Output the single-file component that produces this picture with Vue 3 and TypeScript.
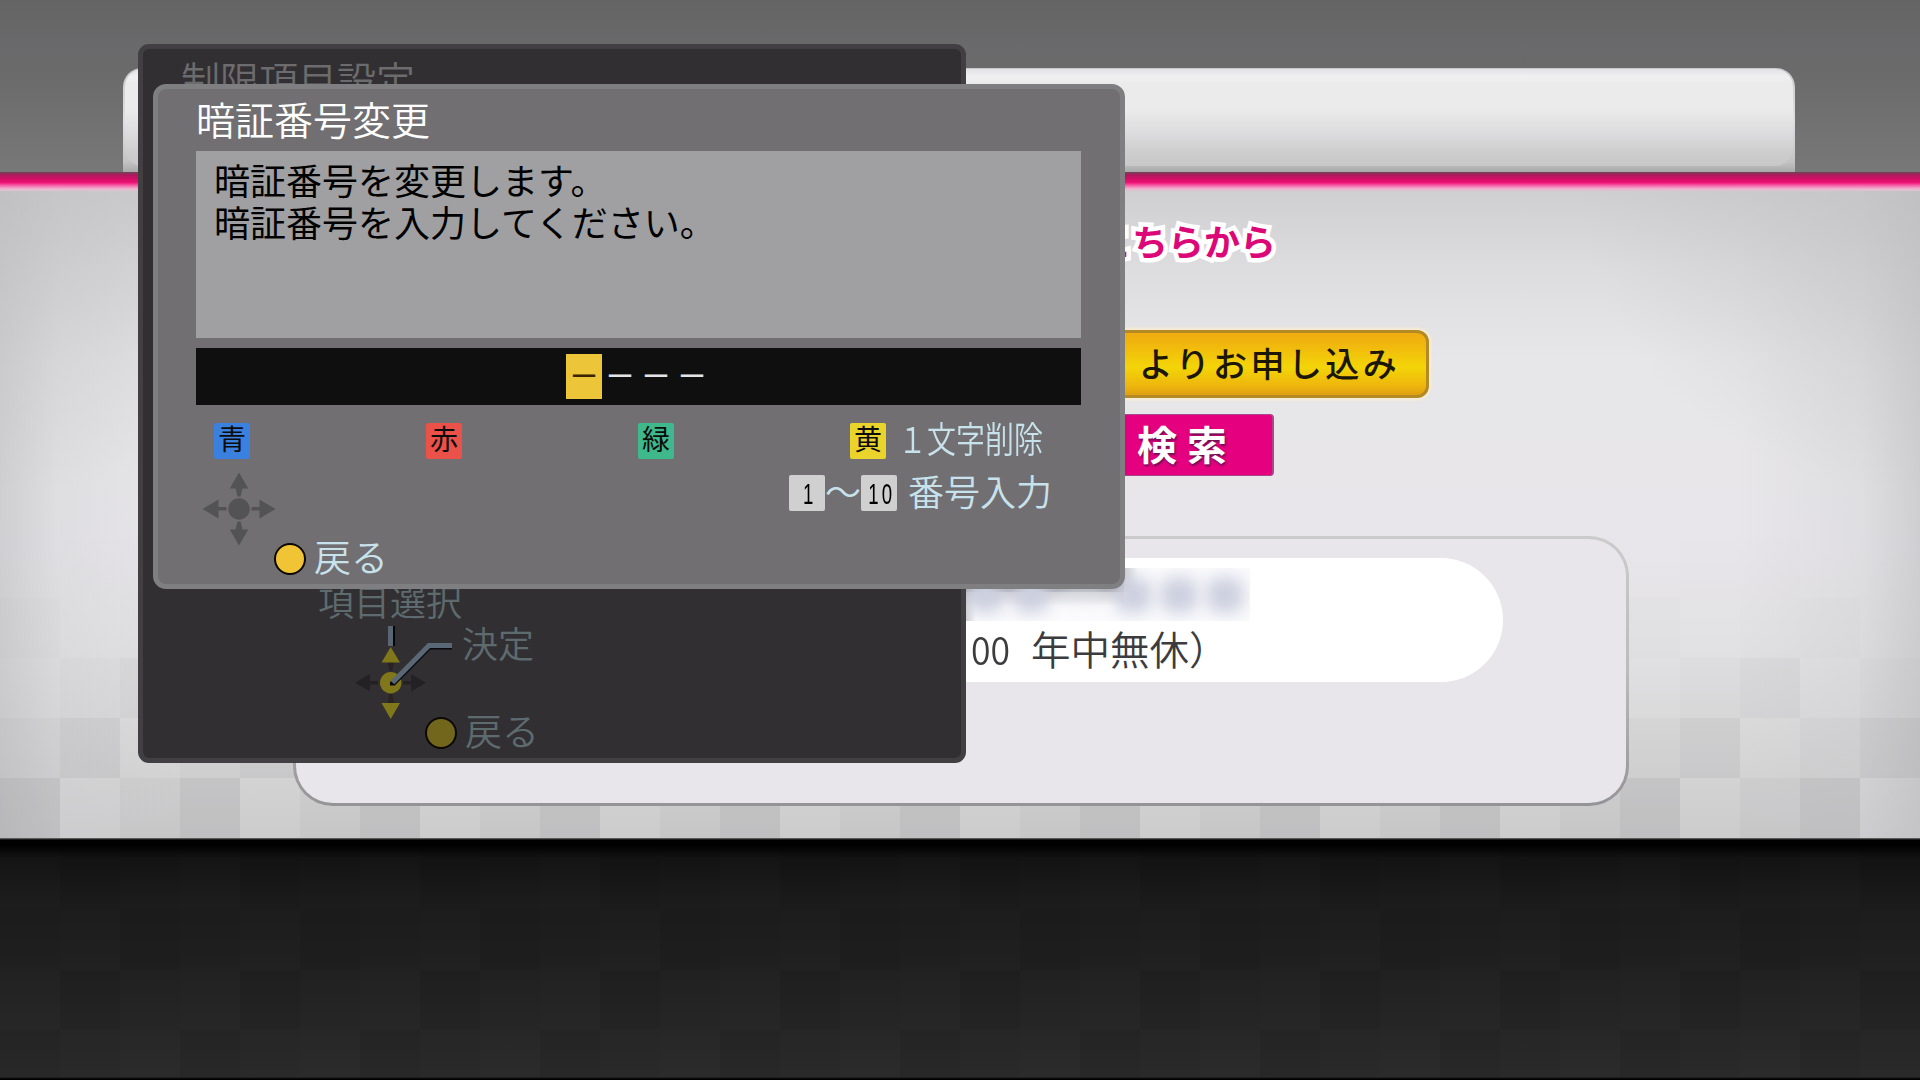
<script setup lang="ts">
import { ref } from 'vue'

interface ColorKey {
  name: string
  color: string
  label?: string
}

const digits = ref<string[]>(['－', '－', '－', '－'])
const cursor = ref(0)

const message = ['暗証番号を変更します。', '暗証番号を入力してください。']

const colorKeys: ColorKey[] = [
  { name: '青', color: 'blue' },
  { name: '赤', color: 'red' },
  { name: '緑', color: 'green' },
  { name: '黄', color: 'yellow', label: '１文字削除' }
]

// each row of tiles is shifted one tile from the row below
const lightRows = [
  { shift: -60, strength: 0.06 },
  { shift: 0, strength: 0.12 },
  { shift: -60, strength: 0.35 },
  { shift: -120, strength: 0.6 },
  { shift: 0, strength: 0.85 }
]
const darkRows = [0, -120, 0, -60]
</script>

<template>
  <div class="screen">
    <header class="top">
      <div class="tab"><div class="tab-shine"></div></div>
    </header>
    <div class="pink-line"></div>

    <main class="stage">
      <div class="tiles">
        <div
          v-for="(row, i) in lightRows"
          :key="i"
          class="tile-row"
          :style="{ backgroundPositionX: row.shift + 'px', opacity: row.strength }"
        ></div>
      </div>
      <div class="stage-content">
        <p class="lead">こちらから</p>
        <div class="apply">よりお申し込み</div>
        <div class="search">検索</div>
        <section class="contact">
          <div class="pill">
            <div class="phone">
              <i></i><i></i><i class="dash"></i><i></i><i></i><i></i>
            </div>
            <p class="hours"><span class="num">00</span><span>年中無休）</span></p>
          </div>
        </section>
      </div>
    </main>

    <footer class="bottom">
      <div v-for="(shift, i) in darkRows" :key="i" class="dark-row" :style="{ backgroundPositionX: shift + 'px' }"></div>
    </footer>

    <section class="dialog parent">
      <h2>制限項目設定</h2>
      <div class="guide">
        <p class="select-label">項目選択</p>
        <div class="guide-row">
          <svg class="guide-pad" width="98" height="91" viewBox="354 624 98 91">
            <path d="M355 682.7L370 674V681H378V684.5H370V691.5ZM426 682.7L411 674V681H403V684.5H411V691.5Z" fill="#232123" />
            <path d="M387.5 662H394L392.3 671H389.3ZM389.3 694H392.3L394 703H387.5Z" fill="#2b2224" />
            <path d="M390.7 647L400 662.5H381.5ZM390.7 719L400 703H381.5Z" fill="#80771a" />
            <circle cx="390.7" cy="682.7" r="10.7" fill="#80771a" />
            <path d="M393.5 626V646" stroke="#050506" stroke-width="3" />
            <path d="M390.5 626V646" stroke="#596572" stroke-width="5" />
            <path d="M390 683.5H394L429.5 647.5H452" fill="none" stroke="#08090d" stroke-width="4" />
            <path d="M392.5 682.5L429 645.5H452" fill="none" stroke="#596874" stroke-width="5" />
          </svg>
          <span>決定</span>
        </div>
        <p class="back"><i class="dot"></i><span>戻る</span></p>
      </div>
    </section>

    <section class="dialog pin">
      <h2>暗証番号変更</h2>
      <div class="message">
        <p v-for="line in message" :key="line">{{ line }}</p>
      </div>
      <div class="code">
        <span v-for="(d, i) in digits" :key="i" class="digit" :class="{ active: i === cursor }">{{ d }}</span>
      </div>
      <div class="color-keys">
        <div v-for="k in colorKeys" :key="k.name" class="color-key">
          <span class="key" :class="k.color">{{ k.name }}</span>
          <span v-if="k.label" class="key-label">{{ k.label }}</span>
        </div>
      </div>
      <div class="lower">
        <div class="lower-left">
          <svg class="pad" width="74" height="74" viewBox="-37 -37 74 74">
            <g fill="#535255">
              <circle r="10.7" />
              <path d="M0 -36.5L9.2 -20.5H3.5L1.5 -12.5H-1.5L-3.5 -20.5H-9.2Z" />
              <path d="M0 36.5L9.2 20.5H3.5L1.5 12.5H-1.5L-3.5 20.5H-9.2Z" />
              <path d="M-36.5 0L-20.5 -9.5V-2H-12.5V1.5H-20.5V9.5Z" />
              <path d="M36.5 0L20.5 -9.5V-2H12.5V1.5H20.5V9.5Z" />
            </g>
          </svg>
          <p class="back"><i class="dot"></i><span>戻る</span></p>
        </div>
        <div class="number-hint">
          <span class="num-key"><b>1</b></span>
          <span class="wave">～</span>
          <span class="num-key"><b>10</b></span>
          <span class="hint-label">番号入力</span>
        </div>
      </div>
    </section>
  </div>
</template>

<style>
body {
  margin: 0;
  overflow: hidden;
}
</style>

<style scoped>
.screen {
  position: relative;
  width: 1920px;
  height: 1080px;
  overflow: hidden;
  display: flex;
  flex-direction: column;
  font-family: 'Noto Sans CJK JP', sans-serif;
  font-weight: 350;
}

p, h2 {
  margin: 0;
}

.top {
  box-sizing: border-box;
  height: 172px;
  padding: 68px 125px 0 123px;
  background: linear-gradient(#656565, #6a696b 30%, #6a6a6a 40%, #797879);
}

.tab {
  height: 104px;
  border-radius: 19px 19px 0 0;
  background: linear-gradient(#c9c9ca, #e0e0e2 50%, #c4c4c5 90%, #a9a9a9);
  overflow: hidden;
}

.tab-shine {
  margin: 1px 2px 0;
  height: 97px;
  border-radius: 18px;
  background: linear-gradient(#e2e2e4, #f0f0f2 8%, #ebebeb 15%, #ebebeb 42%, #dddcde 65%, #cecece 85%, #c8c8c8);
}

.pink-line {
  height: 19px;
  background: linear-gradient(#6e4455, #b51560 18%, #d30f66 38%, #ee1278 55%, #f766aa 72%, #efb3cf 88%, #dcc5d0);
}

.stage {
  position: relative;
  height: 647px;
  background:
    radial-gradient(ellipse 340px 300px at 0 0, rgba(190, 190, 193, 0.6), transparent),
    radial-gradient(ellipse 340px 300px at 100% 0, rgba(190, 190, 193, 0.6), transparent),
    linear-gradient(90deg, rgba(190, 190, 193, 0.6), rgba(205, 205, 208, 0.35) 3%, transparent 9.5%, transparent 90.5%, rgba(205, 205, 208, 0.35) 97%, rgba(190, 190, 193, 0.6)),
    linear-gradient(#cfcfd1, #dddddf 12%, #e7e6e8 26%, #e8e6ea 55%, #e2e1e3 70%, #d8d8d9 84%, #cccccd);
  overflow: hidden;
}

.tiles {
  position: absolute;
  inset: 347px 0 0;
}

.tile-row {
  height: 60px;
  background: repeating-linear-gradient(90deg, rgba(120, 120, 122, 0.19) 0 60px, transparent 60px 120px, rgba(120, 120, 122, 0.08) 120px 180px);
  background-size: 180px 100%;
}

.stage-content {
  position: relative;
  display: flex;
  flex-direction: column;
  height: 100%;
  align-items: flex-start;
}

.lead {
  margin: 29px 0 0 1096px;
  font-size: 36px;
  line-height: 40px;
  font-weight: 700;
  color: #dd0878;
  -webkit-text-stroke: 9px #fff;
  paint-order: stroke fill;
}

.apply {
  box-sizing: border-box;
  width: 409px;
  height: 68px;
  margin: 70px 0 0 1020px;
  padding-left: 116px;
  border: 3px solid #b38a24;
  border-radius: 12px;
  background: linear-gradient(#efac10, #f1b80d 20%, #f3d508 55%, #eeb60d 85%, #dfa010);
  box-shadow: 0 0 3px 2px rgba(255, 240, 205, 0.8);
  color: #1b1605;
  font-size: 34px;
  font-weight: 500;
  letter-spacing: 3.4px;
  line-height: 59px;
}

.search {
  box-sizing: border-box;
  width: 254px;
  height: 62px;
  margin: 16px 0 0 1020px;
  padding-left: 116px;
  border: 1px solid #a94788;
  border-right-width: 2px;
  border-radius: 4px;
  background: #e4007f;
  color: #fff;
  font-size: 40px;
  font-weight: 700;
  letter-spacing: 10px;
  line-height: 57px;
  text-shadow: 1px 2px 2px rgba(80, 20, 70, 0.8);
}

.contact {
  box-sizing: border-box;
  width: 1336px;
  height: 270px;
  margin: 60px 0 0 293px;
  padding-top: 19px;
  border: 3px solid transparent;
  border-radius: 40px;
  background:
    linear-gradient(#e8e6ea, #e8e6ea) padding-box,
    linear-gradient(#cbcbcc, #bbb 50%, #949396) border-box;
}

.pill {
  width: 1117px;
  height: 124px;
  margin-left: 90px;
  border-radius: 63px;
  background: #fff;
  display: flex;
  flex-direction: column;
}

/* number is hidden behind a soft mask */
.phone {
  display: flex;
  align-items: center;
  gap: 8px;
  width: 284px;
  height: 53px;
  margin: 10px 0 0 580px;
  overflow: hidden;
  background:
    linear-gradient(rgba(120, 120, 130, 0.45), rgba(120, 120, 130, 0.45) 20px, transparent 38px) 0 0 / 158px 100% no-repeat,
    linear-gradient(90deg, rgba(120, 120, 130, 0.4) 158px, transparent 172px) 0 0 / 100% 24px no-repeat,
    linear-gradient(90deg, rgba(120, 120, 130, 0.35), transparent 10px),
    #fbfbfd;
}

.phone i {
  width: 38px;
  height: 36px;
  flex: none;
  border-radius: 14px;
  background: #cdd0df;
  filter: blur(8px);
}

.phone .dash {
  width: 48px;
  height: 10px;
  background: #dfe0ea;
}

.hours {
  display: flex;
  margin: 2px 0 0 585px;
  font-size: 39.5px;
  line-height: 50px;
  color: #3c3c3e;
}

.hours .num {
  width: 60px;
  transform: scaleX(0.9);
  transform-origin: 0 50%;
}

.bottom {
  box-sizing: border-box;
  height: 242px;
  padding-top: 12px;
  background: linear-gradient(#777 0, #000 2px, #020202 8px, #141415 20px, #1c1c1d 60px, #1f1f20 110px, #252526 170px, #2b2b2c 239px, #000 241px);
}

.dark-row {
  height: 60px;
  background: repeating-linear-gradient(90deg, transparent 0 60px, rgba(0, 0, 0, 0.08) 60px 120px, rgba(0, 0, 0, 0.03) 120px 180px);
  background-size: 180px 100%;
}

.dialog {
  position: absolute;
  box-sizing: border-box;
  display: flex;
  flex-direction: column;
}

.dialog h2 {
  font-size: 39px;
  font-weight: 350;
  line-height: 59px;
}

.parent {
  left: 138px;
  top: 44px;
  width: 828px;
  height: 719px;
  padding: 0 38px 7px;
  border: 5px solid #413f42;
  border-radius: 11px;
  background: #322f32;
  color: #5d6b6f;
}

.parent h2 {
  color: #6c6b6d;
}

.guide {
  margin-top: auto;
  font-size: 36px;
  line-height: 36px;
}

.select-label {
  height: 42px;
  padding-left: 137px;
}

.guide-row {
  display: flex;
  height: 91px;
  padding-left: 173px;
}

.guide-row span {
  margin-left: 10px;
}

.guide-pad {
  overflow: visible;
}

.back {
  display: flex;
  align-items: center;
  height: 36px;
  font-size: 37px;
  line-height: 36px;
}

.back span {
  padding-bottom: 6px;
}

.dot {
  box-sizing: border-box;
  width: 32px;
  height: 32px;
  margin-right: 8px;
  border: 2px solid #0c0804;
  border-radius: 50%;
  background: #f0c434;
}

.parent .back {
  padding-left: 244px;
}

.parent .dot {
  background: #71661b;
}

.pin {
  left: 153px;
  top: 84px;
  width: 972px;
  height: 505px;
  padding: 0 39px 0 38px;
  border: 5px solid #7f7e80;
  border-radius: 13px;
  background: #716f72;
  color: #c8e2ec;
}

.pin h2 {
  height: 62px;
  color: #fff;
}

.message {
  box-sizing: border-box;
  height: 187px;
  padding: 7px 0 0 18px;
  background: #a0a0a2;
  color: #000;
  font-size: 36px;
  font-weight: 400;
  line-height: 42px;
}

.code {
  display: flex;
  align-items: center;
  height: 57px;
  margin-top: 10px;
  padding-left: 370px;
  background: #0f0f0f;
}

.digit {
  width: 36px;
  height: 45px;
  line-height: 40px;
  font-size: 31px;
  font-weight: 500;
  text-align: center;
  color: #e4e4e6;
}

.digit.active {
  background: #ecc538;
  color: #3a2404;
}

.color-keys {
  display: grid;
  grid-template-columns: repeat(4, 212px);
  margin-top: 18px;
  padding-left: 18px;
}

.color-key {
  display: flex;
  height: 36px;
}

.key {
  flex: none;
  width: 36px;
  height: 36px;
  border-radius: 2px;
  font-size: 28px;
  font-weight: 400;
  line-height: 31px;
  text-align: center;
  color: #0c0c0c;
}

.blue { background: #3a80de; }
.red { background: #ea5148; }
.green { background: #3fb98c; }
.yellow { background: #ead42c; }

.key-label {
  flex: none;
  margin-left: 12px;
  font-size: 36px;
  line-height: 29px;
  white-space: nowrap;
  transform: scaleX(0.805);
  transform-origin: 0 50%;
}

.lower {
  display: flex;
}

.lower-left {
  width: 593px;
}

.pad {
  display: block;
  margin: 13px 0 0 6px;
}

.lower-left .back {
  margin-top: -5px;
  padding-left: 78px;
}

.number-hint {
  display: flex;
  margin-top: 16px;
  font-size: 36px;
  line-height: 31px;
}

.num-key {
  display: flex;
  justify-content: center;
  width: 36px;
  height: 36px;
  border-radius: 2px;
  background: #d0d0d1;
  color: #000;
  font-family: 'Liberation Sans', sans-serif;
  font-size: 30px;
  line-height: 37px;
}

.num-key b {
  font-weight: 400;
  letter-spacing: 5px;
  margin-right: -5px;
  transform: scaleX(0.62);
}

.wave {
  width: 36px;
}

.hint-label {
  margin-left: 11px;
}
</style>
